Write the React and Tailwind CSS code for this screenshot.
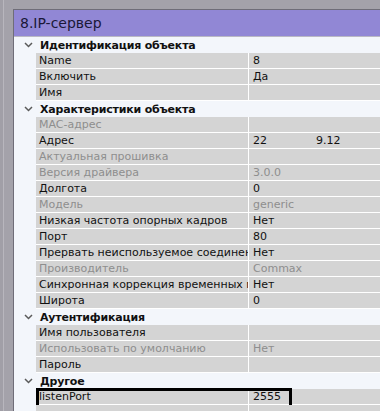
const font = { fontFamily: '"DejaVu Sans", Verdana, sans-serif' };

const groups = [
  {
    title: 'Идентификация объекта',
    rows: [
      { label: 'Name', value: '8' },
      { label: 'Включить', value: 'Да' },
      { label: 'Имя', value: '' },
    ],
  },
  {
    title: 'Характеристики объекта',
    rows: [
      { label: 'MAC-адрес', value: '', dim: true },
      { label: 'Адрес', value: '22', extra: '9.12' },
      { label: 'Актуальная прошивка', value: '', dim: true },
      { label: 'Версия драйвера', value: '3.0.0', dim: true },
      { label: 'Долгота', value: '0' },
      { label: 'Модель', value: 'generic', dim: true },
      { label: 'Низкая частота опорных кадров', value: 'Нет' },
      { label: 'Порт', value: '80' },
      { label: 'Прервать неиспользуемое соединен', value: 'Нет' },
      { label: 'Производитель', value: 'Commax', dim: true },
      { label: 'Синхронная коррекция временных м', value: 'Нет' },
      { label: 'Широта', value: '0' },
    ],
  },
  {
    title: 'Аутентификация',
    rows: [
      { label: 'Имя пользователя', value: '' },
      { label: 'Использовать по умолчанию', value: 'Нет', dim: true },
      { label: 'Пароль', value: '' },
    ],
  },
  {
    title: 'Другое',
    rows: [{ label: 'listenPort', value: '2555', selected: true }, { label: '', value: '' }],
  },
];

function Chevron() {
  return (
    <svg width="9" height="6" viewBox="0 0 9 6" className="block">
      <path d="M1 1 L4.5 4.5 L8 1" fill="none" stroke="#5a5a5a" strokeWidth="1.5" />
    </svg>
  );
}

function GroupHeader({ title }) {
  return (
    <div className="flex h-[16px] items-center bg-[#f3f6fb]">
      <div className="flex w-[26px] justify-center pl-[2px]">
        <Chevron />
      </div>
      <span className="text-[11px] font-bold leading-none tracking-[-0.2px] text-[#111]">{title}</span>
    </div>
  );
}

function Row({ row }) {
  const color = row.dim ? 'text-[#8e8e8e]' : 'text-[#111]';
  return (
    <div className="relative flex h-[16px] bg-[#f3f6fb]">
      <div className="w-[22px] shrink-0" />
      <div className="flex flex-1 border-b border-white bg-[#d4d4d4]">
        <div className={`flex w-[212px] shrink-0 items-center overflow-hidden whitespace-nowrap pl-[3px] text-[11px] leading-none ${color}`}>
          {row.label}
        </div>
        <div className={`flex flex-1 items-center border-l border-white pl-[4px] text-[11px] leading-none ${color}`}>
          <span className="w-[63px]">{row.value}</span>
          {row.extra && <span>{row.extra}</span>}
        </div>
      </div>
      {row.selected && (
        <div className="absolute left-[22px] top-[-1px] h-[20px] w-[256px] border-[3px] border-black" />
      )}
    </div>
  );
}

export default function App() {
  return (
    <div className="flex h-[411px] w-[380px] overflow-hidden bg-[#a4a2aa]" style={font}>
      <div className="flex w-[13px] shrink-0">
        <div className="w-[3px] bg-[#a19fa7]" />
        <div className="w-[1px] bg-[#b8b6bd]" />
        <div className="w-[9px] bg-[#a4a2aa]" />
      </div>
      <div className="flex flex-1 flex-col pt-[9px]">
        <div className="flex flex-1 flex-col border-l border-t border-[#6f6d78] bg-[#f3f6fb]">
          <div className="flex h-[27px] items-center border-b border-[#b9b8c4] bg-[#9187d5] pl-[6px] text-[14px] text-[#1a1838]">
            8.IP-сервер
          </div>
          <div className="flex flex-col">
            {groups.map((g) => (
              <div key={g.title} className="flex flex-col">
                <GroupHeader title={g.title} />
                {g.rows.map((r, i) => (
                  <Row key={i} row={r} />
                ))}
              </div>
            ))}
          </div>
        </div>
      </div>
    </div>
  );
}
